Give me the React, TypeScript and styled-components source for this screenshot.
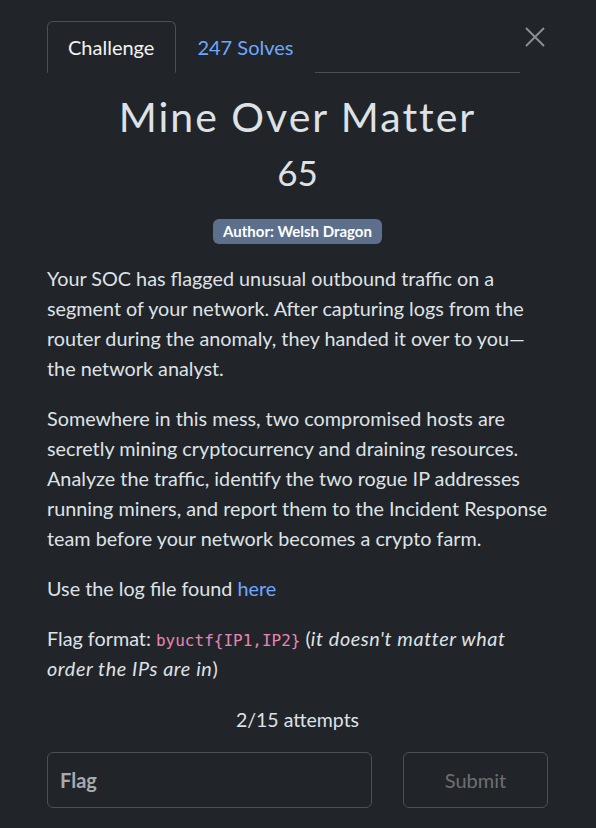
import React from "react";
import styled, { createGlobalStyle } from "styled-components";

const Global = createGlobalStyle`
  html, body { margin: 0; padding: 0; background: #212529; }
  body { font-family: Lato, "Noto Sans", sans-serif; color: #dee2e6; }
  * { box-sizing: border-box; }
`;

const Modal = styled.div`
  width: 596px;
  min-height: 828px;
  background: #212529;
  padding: 21px 48px 0 47px;
  display: flex;
  flex-direction: column;
`;

const HeaderRow = styled.div`
  display: flex;
  align-items: flex-start;
`;

const Tabs = styled.nav`
  flex: 1;
  display: flex;
  border-bottom: 1px solid #495057;
`;

const Tab = styled.div<{ $active?: boolean }>`
  height: 52px;
  padding: 0 21px 0 20px;
  display: flex;
  align-items: center;
  font-size: 20px;
  margin-bottom: -1px;
  border: 1px solid ${(p) => (p.$active ? "#495057" : "transparent")};
  border-bottom-color: ${(p) => (p.$active ? "#212529" : "transparent")};
  border-radius: 6px 6px 0 0;
  color: ${(p) => (p.$active ? "#f1f3f5" : "#6ea8fe")};
  background: #212529;
`;

const Close = styled.button`
  width: 30px;
  height: 30px;
  margin: 1px -2px 0 0;
  padding: 0;
  border: 0;
  background: transparent;
  display: flex;
  align-items: center;
  justify-content: center;
  color: #8a8d91;
`;

const Title = styled.h1`
  margin: 20px 0 0;
  font-size: 41px;
  line-height: 48px;
  font-weight: 400;
  letter-spacing: 2px;
  text-align: center;
  color: #dee2e6;
`;

const Points = styled.div`
  margin-top: 12px;
  font-size: 35px;
  line-height: 38px;
  text-align: center;
  color: #dee2e6;
`;

const BadgeRow = styled.div`
  margin-top: 28px;
  display: flex;
  justify-content: center;
`;

const Badge = styled.span`
  background: #5c6f8c;
  color: #fff;
  font-weight: 700;
  font-size: 15px;
  line-height: 25px;
  height: 25px;
  padding: 0 10px;
  border-radius: 6px;
`;

const Description = styled.div`
  margin-top: 19px;
`;

const Para = styled.p`
  margin: 0 0 20px;
  font-size: 19.8px;
  line-height: 30px;
  color: #dee2e6;
`;

const Link = styled.a`
  color: #6ea8fe;
  text-decoration: none;
`;

const Code = styled.code`
  font-family: "DejaVu Sans Mono", "Liberation Mono", monospace;
  font-size: 16px;
  line-height: 1;
  color: #e685b5;
`;

const Note = styled.em`
  letter-spacing: 0.6px;
`;

const Attempts = styled.div`
  margin-top: 2px;
  text-align: center;
  font-size: 19.5px;
  line-height: 30px;
  color: #dee2e6;
`;

const Form = styled.form`
  margin-top: 17px;
  display: flex;
  gap: 31px;
`;

const Input = styled.input`
  flex: 0 0 325px;
  height: 56px;
  background: #212529;
  border: 1px solid #495057;
  border-radius: 6px;
  padding: 0 12px;
  font-family: Lato, sans-serif;
  font-size: 20px;
  color: #dee2e6;
  &::placeholder { color: #a8abae; font-weight: 700; }
`;

const Submit = styled.button`
  flex: 1;
  height: 56px;
  background: transparent;
  border: 1px solid #495057;
  border-radius: 6px;
  font-family: Lato, sans-serif;
  font-size: 20px;
  color: #6c7075;
`;

export default function App() {
  return (
    <>
      <Global />
      <Modal>
        <HeaderRow>
          <Tabs>
            <Tab $active>Challenge</Tab>
            <Tab>247 Solves</Tab>
          </Tabs>
          <Close aria-label="Close">
            <svg width="20" height="20" viewBox="0 0 20 20">
              <path d="M1 1 L19 19 M19 1 L1 19" stroke="currentColor" strokeWidth="2" />
            </svg>
          </Close>
        </HeaderRow>
        <Title>Mine Over Matter</Title>
        <Points>65</Points>
        <BadgeRow>
          <Badge>Author: Welsh Dragon</Badge>
        </BadgeRow>
        <Description>
          <Para>
            Your SOC has flagged unusual outbound traffic on a segment of your network. After
            capturing logs from the router during the anomaly, they handed it over to you—the
            network analyst.
          </Para>
          <Para>
            Somewhere in this mess, two compromised hosts are secretly mining cryptocurrency and
            draining resources. Analyze the traffic, identify the two rogue IP addresses running
            miners, and report them to the Incident Response team before your network becomes a
            crypto farm.
          </Para>
          <Para>
            Use the log file found <Link href="#">here</Link>
          </Para>
          <Para>
            Flag format: <Code>byuctf{"{"}IP1,IP2{"}"}</Code> (<Note>it doesn't matter what order the IPs are in</Note>)
          </Para>
        </Description>
        <Attempts>2/15 attempts</Attempts>
        <Form onSubmit={(e) => e.preventDefault()}>
          <Input placeholder="Flag" />
          <Submit type="submit">Submit</Submit>
        </Form>
      </Modal>
    </>
  );
}
